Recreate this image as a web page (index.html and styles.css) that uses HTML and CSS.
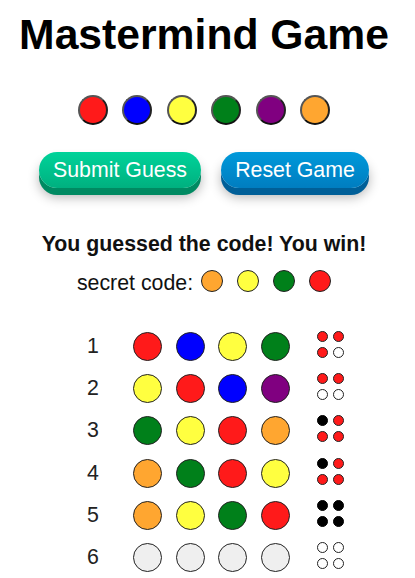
FILE: index.html
```html
<!DOCTYPE html>
<html lang="en">
<head>
<meta charset="utf-8">
<title>Mastermind Game</title>
<link rel="stylesheet" href="styles.css">
</head>
<body>
<div class="app">
  <h1 class="title">Mastermind Game</h1>

  <div class="palette">
    <span class="swatch red"></span>
    <span class="swatch blue"></span>
    <span class="swatch yellow"></span>
    <span class="swatch green"></span>
    <span class="swatch purple"></span>
    <span class="swatch orange"></span>
  </div>

  <div class="actions">
    <button class="btn btn-submit">Submit Guess</button>
    <button class="btn btn-reset">Reset Game</button>
  </div>

  <p class="message">You guessed the code! You win!</p>

  <div class="secret">
    <span class="secret-label">secret code:</span>
    <span class="code-peg orange"></span>
    <span class="code-peg yellow"></span>
    <span class="code-peg green"></span>
    <span class="code-peg red"></span>
  </div>

  <div class="board">
    <div class="row">
      <span class="num">1</span>
      <span class="peg red"></span><span class="peg blue"></span><span class="peg yellow"></span><span class="peg green"></span>
      <span class="feedback"><i class="dot hit-red"></i><i class="dot hit-red"></i><i class="dot hit-red"></i><i class="dot miss"></i></span>
    </div>
    <div class="row">
      <span class="num">2</span>
      <span class="peg yellow"></span><span class="peg red"></span><span class="peg blue"></span><span class="peg purple"></span>
      <span class="feedback"><i class="dot hit-red"></i><i class="dot hit-red"></i><i class="dot miss"></i><i class="dot miss"></i></span>
    </div>
    <div class="row">
      <span class="num">3</span>
      <span class="peg green"></span><span class="peg yellow"></span><span class="peg red"></span><span class="peg orange"></span>
      <span class="feedback"><i class="dot hit-black"></i><i class="dot hit-red"></i><i class="dot hit-red"></i><i class="dot hit-red"></i></span>
    </div>
    <div class="row">
      <span class="num">4</span>
      <span class="peg orange"></span><span class="peg green"></span><span class="peg red"></span><span class="peg yellow"></span>
      <span class="feedback"><i class="dot hit-black"></i><i class="dot hit-red"></i><i class="dot hit-red"></i><i class="dot hit-red"></i></span>
    </div>
    <div class="row">
      <span class="num">5</span>
      <span class="peg orange"></span><span class="peg yellow"></span><span class="peg green"></span><span class="peg red"></span>
      <span class="feedback"><i class="dot hit-black"></i><i class="dot hit-black"></i><i class="dot hit-black"></i><i class="dot hit-black"></i></span>
    </div>
    <div class="row">
      <span class="num">6</span>
      <span class="peg empty"></span><span class="peg empty"></span><span class="peg empty"></span><span class="peg empty"></span>
      <span class="feedback"><i class="dot miss"></i><i class="dot miss"></i><i class="dot miss"></i><i class="dot miss"></i></span>
    </div>
  </div>
</div>
</body>
</html>
```

FILE: styles.css
```css
* { box-sizing: border-box; }

html, body {
  margin: 0;
  padding: 0;
  background: #ffffff;
}

body {
  font-family: "Liberation Sans", Arial, sans-serif;
  color: #111;
}

.app {
  padding: 0 7px 0 0;
  display: flex;
  flex-direction: column;
  align-items: center;
}

.title {
  margin: 10px 0 0;
  font-size: 42.67px;
  line-height: 49px;
  font-weight: bold;
  color: #000;
}

.palette {
  margin-top: 36px;
  display: flex;
  gap: 14.6px;
}

.swatch {
  display: block;
  width: 30px;
  height: 30px;
  border-radius: 50%;
  border: 2px solid #555;
  border-right-color: #222;
  border-bottom-color: #111;
}

.red { background: #ff1a1a; }
.blue { background: #0000ff; }
.yellow { background: #ffff40; }
.green { background: #00801a; }
.purple { background: #800080; }
.orange { background: #ffa630; }
.empty { background: #efefef; }

.actions {
  margin-top: 27px;
  display: flex;
  gap: 20px;
}

.btn {
  font-family: "Liberation Sans", Arial, sans-serif;
  font-size: 21.33px;
  line-height: 24px;
  height: 36px;
  padding: 6px 14px;
  border: none;
  border-radius: 19px;
  color: #fff;
  cursor: pointer;
}

.btn-submit {
  width: 162px;
  background: linear-gradient(#00d39a, #00b07f);
  box-shadow: 0 7px 0 #008a62, 0 9px 12px rgba(0, 0, 0, 0.3);
}

.btn-reset {
  width: 148px;
  background: linear-gradient(#0099da, #007dc0);
  box-shadow: 0 7px 0 #005f98, 0 9px 12px rgba(0, 0, 0, 0.3);
}

.message {
  margin: 44px 0 0;
  font-size: 21.33px;
  line-height: 24px;
  font-weight: bold;
}

.secret {
  margin-top: 14px;
  display: flex;
  align-items: center;
  gap: 14px;
  font-size: 21.33px;
  line-height: 24px;
}

.secret-label {
  margin-right: -6px;
}

.code-peg {
  display: block;
  width: 22px;
  height: 22px;
  border-radius: 50%;
  border: 1px solid #222;
  margin-bottom: 4px;
}

.board {
  align-self: flex-start;
  margin: 29px 0 0 73px;
  display: flex;
  flex-direction: column;
}

.row {
  height: 42.33px;
  display: flex;
  align-items: center;
}

.num {
  width: 40px;
  text-align: center;
  font-size: 21.33px;
  color: #222;
  margin-right: 20px;
}

.peg {
  display: block;
  width: 29px;
  height: 29px;
  border-radius: 50%;
  border: 1px solid #222;
  margin-right: 13.5px;
}

.feedback {
  margin-left: 13.5px;
  display: grid;
  grid-template-columns: 11px 11px;
  gap: 5px;
  margin-top: -4px;
}

.dot {
  display: block;
  width: 11px;
  height: 11px;
  border-radius: 50%;
  border: 1px solid #222;
}

.hit-red { background: #ff1a1a; }
.hit-black { background: #000; border-color: #000; }
.miss { background: #fff; }
```
